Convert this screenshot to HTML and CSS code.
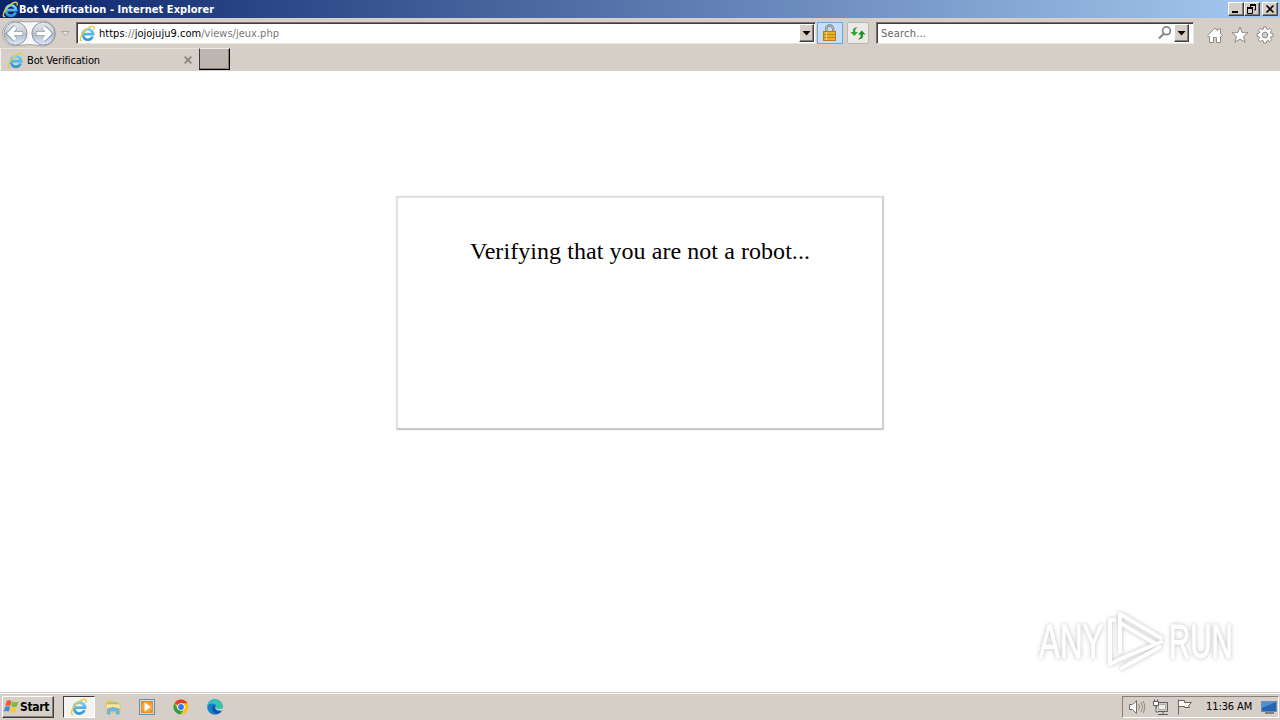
FILE: index.html
```html
<!DOCTYPE html>
<html lang="en">

<head>
    <meta charset="UTF-8">
    <title>Bot Verification</title>
    <link rel="stylesheet" href="styles.css">
</head>

<body>
    <!-- Shared Internet Explorer logo -->
    <svg class="defs" width="0" height="0">
        <defs>
            <linearGradient id="ie-blue" x1="0" y1="0" x2="0" y2="1">
                <stop offset="0" stop-color="#6fd0f7"/>
                <stop offset="1" stop-color="#2a98d8"/>
            </linearGradient>
            <linearGradient id="nav-fill" x1="0" y1="0" x2="0" y2="1">
                <stop offset="0" stop-color="#e6e9ee"/>
                <stop offset=".48" stop-color="#c6ccd4"/>
                <stop offset=".5" stop-color="#aebac8"/>
                <stop offset="1" stop-color="#dceafa"/>
            </linearGradient>
            <symbol id="ie" viewBox="0 0 16 16">
                <path d="M12.900 10.900A4.900 4.900 0 1 1 13.300 8.600H4.500" fill="none" stroke="url(#ie-blue)" stroke-width="2.500"/>
                <path d="M2.900 14.600C.6 15.300.9 12.300 2.500 9.500C5.500 4.300 11.300.2 13.800 1.400C14.700 1.900 14.500 3.200 14 4.200" fill="none" stroke="#f0c840" stroke-width="1.300"/>
            </symbol>
        </defs>
    </svg>

    <div class="titlebar">
        <svg class="ie-icon" width="17" height="17"><use href="#ie"/></svg>
        <span class="title">Bot Verification - Internet Explorer</span>
        <div class="window-buttons">
            <svg class="win-button" width="16" height="14"><path d="M3 9h6" stroke="#000" stroke-width="2"/></svg>
            <svg class="win-button" width="16" height="14"><path d="M5 1.500h6M5 2.500h6M5.500 1v3M10.500 1v6H9M2 4.500h6M2 5.500h6M2.500 4v6.500h5V4" fill="none" stroke="#000"/></svg>
            <svg class="win-button close" width="16" height="14"><path d="M3.500 2.500l7 7M10.500 2.500l-7 7" stroke="#000" stroke-width="1.700"/></svg>
        </div>
    </div>

    <div class="navbar">
        <svg class="nav-buttons" width="76" height="30">
            <path d="M15 3Q29 5 43 3A12 12 0 0 1 43 28Q29 25 15 28A12 12 0 0 1 15 3Z" fill="#f8f8f8" stroke="#aaa49f"/>
            <circle cx="15.500" cy="15.500" r="11.500" fill="url(#nav-fill)" stroke="#8d98a6"/>
            <circle cx="43.500" cy="15.500" r="11.500" fill="url(#nav-fill)" stroke="#8d98a6"/>
            <path d="M23 15.500H10M15.500 9l-6.500 6.500 6.500 6.500" fill="none" stroke="#8795a8" stroke-width="5"/>
            <path d="M22.500 15.500H10M15.500 9.300l-6.200 6.200 6.200 6.200" fill="none" stroke="#fff" stroke-width="3.600"/>
            <path d="M36 15.500H49M43.500 9l6.500 6.500-6.500 6.500" fill="none" stroke="#8795a8" stroke-width="5"/>
            <path d="M36.500 15.500H49M43.500 9.300l6.200 6.200-6.200 6.200" fill="none" stroke="#fff" stroke-width="3.600"/>
            <path d="M61.500 13.500h8l-4 4z" fill="#e5e1dc" stroke="#aaa6a1"/>
        </svg>
        <div class="address">
            <svg class="ie-icon" width="17" height="17"><use href="#ie"/></svg>
            <span class="url">https<i>://</i>jojojuju9.com<i>/views/jeux.php</i></span>
            <svg class="drop-button" width="15" height="18"><path d="M2.500 6h8l-4 4.500z"/></svg>
        </div>
        <div class="lock">
            <svg width="16" height="18">
                <path d="M4.200 9V5a3.500 3.500 0 0 1 7 0V9" fill="none" stroke="#777" stroke-width="2.400"/>
                <path d="M4.200 9V5a3.500 3.500 0 0 1 7 0V9" fill="none" stroke="#ddd" stroke-width=".8"/>
                <rect x="1.500" y="7.500" width="12" height="9" fill="#e8b12a" stroke="#b87e12"/>
                <path d="M2 10.500h11M2 13.500h11" stroke="#bd8515"/>
                <path d="M4.500 8v8" stroke="#f8d878"/>
            </svg>
        </div>
        <div class="refresh">
            <svg width="18" height="18">
                <path d="M8.500 3L6.300 5.500V8H9L5.300 12 1.500 8H4V5.500Q5 3.300 8.500 3Z" fill="#35a137"/>
                <path d="M9 15.500l2.500-2.500V10.500H9L12.800 6.500 16.500 10.500H14v2.500Q13 15.300 9 15.500Z" fill="#279029"/>
            </svg>
        </div>
        <div class="search">
            <span>Search...</span>
            <svg class="magnifier" width="16" height="16">
                <circle cx="9.500" cy="5.800" r="3.900" fill="none" stroke="#858585" stroke-width="1.700"/>
                <path d="M6.700 8.700L2 13.500" stroke="#858585" stroke-width="2.200"/>
            </svg>
            <svg class="drop-button" width="15" height="18"><path d="M2.500 6h8l-4 4.500z"/></svg>
        </div>
        <div class="tools">
            <svg width="18" height="18"><path d="M1.500 9.500L9 2l2.500 2.500V3h3v4.500L16.500 9.500l-1.500 1.500-.5-.5v6H10.500v-5h-3v5H3.500v-6l-.5.5z" fill="#fff" stroke="#8d8a87"/></svg>
            <svg width="18" height="18"><path d="M9 1l2.200 5.500 5.900.3-4.600 3.700 1.600 5.800L9 13l-5.100 3.300 1.600-5.800L.9 6.800l5.900-.3z" fill="#fff" stroke="#8d8a87"/></svg>
            <svg width="18" height="18">
                <path d="M7.700 1h2.600l.5 2.200 1 .4 1.900-1.200 1.900 1.900-1.200 1.900.4 1 2.200.5v2.600l-2.200.5-.4 1 1.200 1.900-1.900 1.900-1.900-1.200-1 .4-.5 2.200H7.700l-.5-2.200-1-.4-1.900 1.200-1.900-1.900 1.200-1.900-.4-1L1 10.300V7.700l2.200-.5.4-1-1.200-1.900 1.900-1.900 1.900 1.200 1-.4z" fill="#fff" stroke="#8d8a87"/>
                <circle cx="9" cy="9" r="2.800" fill="#d6d0ca" stroke="#8d8a87"/>
            </svg>
        </div>
    </div>

    <div class="tabbar">
        <div class="tab">
            <svg class="ie-icon" width="17" height="17"><use href="#ie"/></svg>
            <span class="tab-title">Bot Verification</span>
            <svg class="tab-close" width="8" height="8"><path d="M.7.7l6.600 6.600M7.300.7L.7 7.300" stroke="#8b8783" stroke-width="1.900"/></svg>
        </div>
        <div class="new-tab"></div>
    </div>

    <div class="page">
        <div class="box">Verifying that you are not a robot...</div>

        <div class="watermark">
            <span class="mark-any">ANY</span>
            <svg width="60" height="66" viewBox="0 0 60 66" fill="none" stroke="#fff" stroke-width="4" stroke-linejoin="round" stroke-linecap="round">
                <path d="M14 44V6l41 24M14 15l34 20"/>
                <path d="M8 12H4v44l10-5L55 34M54 39L16 60"/>
            </svg>
            <span class="mark-run">RUN</span>
        </div>
    </div>

    <div class="taskbar">
        <div class="start">
            <svg width="17" height="16">
                <path d="M3.800 2Q6 .5 8.500 2.200L7.300 7Q5 5.800 2.400 7z" fill="#ee5a2b"/>
                <path d="M9.400 2.500Q12.500 4 15.500 2.500L14 7.400Q11 8.600 8.200 7.300z" fill="#7cbd3c"/>
                <path d="M2.200 7.900Q5 6.600 7.100 7.900L5.800 12.600Q3.500 11.300.8 12.600z" fill="#3f8bd8"/>
                <path d="M8 8.200Q11 9.600 13.800 8.200L12.500 13Q9.500 14.500 6.600 13z" fill="#fac832"/>
            </svg>
            <span>Start</span>
        </div>
        <div class="task active"><svg width="18" height="18"><use href="#ie"/></svg></div>
        <div class="task">
            <svg width="18" height="18">
                <path d="M2 3.500l2-1.500h4l1 2h6v5H2z" fill="#e9c964"/>
                <path d="M3.500 4.500h10v3h-10z" fill="#7fc38d"/>
                <path d="M2 6h14v8H2z" fill="#f7e5a0" stroke="#dfbd5f" stroke-width=".7"/>
                <path d="M3.500 16v-5Q9 8 15 11v5h-2.500v-3H6v3z" fill="#75bddf" stroke="#4d9dc6" stroke-width=".7"/>
            </svg>
        </div>
        <div class="task">
            <svg width="18" height="18">
                <rect x="1.500" y="1.500" width="15" height="15" fill="#c3ddf1" stroke="#5b91bd"/>
                <rect x="3" y="3" width="12" height="12" fill="#f28b18"/>
                <circle cx="9" cy="9" r="5.500" fill="#f9a13b"/>
                <path d="M6.500 4.500l6.500 4.500-6.500 4.500z" fill="#fff"/>
            </svg>
        </div>
        <div class="task">
            <svg width="18" height="18">
                <circle cx="9" cy="9" r="7.500" fill="#fbc116"/>
                <path d="M9 9L2.500 5.200A7.500 7.500 0 0 1 15.500 5.200H9z" fill="#e33b2e"/>
                <path d="M2.500 5.200A7.500 7.500 0 0 0 8.500 16.500L12 11H5.800z" fill="#2c9f4b"/>
                <circle cx="9" cy="9" r="3.800" fill="#fff"/>
                <circle cx="9" cy="9" r="2.900" fill="#3978e4"/>
            </svg>
        </div>
        <div class="task">
            <svg width="18" height="18">
                <circle cx="9" cy="9" r="7.800" fill="#147fc9"/>
                <path d="M1.500 7A7.800 7.800 0 0 1 16.800 9Q16 12.500 11 11.500Q9.500 11 10.500 9Q10 5.500 6.500 5.500Q3 5.500 1.500 7z" fill="#38c6a2"/>
                <path d="M1.500 7A7.800 7.800 0 0 1 11 1.500Q5 3 1.500 7z" fill="#30aee5"/>
                <path d="M7 7.500Q4.500 13 9.500 15.500Q13.500 16 15.800 12.800Q10 14.500 9 10.500Q8.600 9 9.500 8z" fill="#13509b"/>
                <path d="M9.500 8.500Q8.500 12.800 15.800 12.500L17 10Q13.500 12 11 11Q10 10.500 10.500 9z" fill="#e2e7df"/>
            </svg>
        </div>
        <div class="tray">
            <svg width="18" height="18" fill="#fff" stroke="#716d69">
                <path d="M1.500 6.500h3l4-4v13l-4-4h-3z"/>
                <path d="M10.500 6q2 3 0 6M12.700 4q3.500 5 0 10M15 3q3.500 6 0 12" fill="none" stroke="#8f8b87"/>
            </svg>
            <svg class="network" width="18" height="18" fill="#d6cfc8" stroke="#5f5c59">
                <path d="M4.500 4.500h11v9h-11zM6 16.500h10M11 14v2"/>
                <path d="M6.500 6.500h7v5h-7z" fill="#eee" stroke="#aaa"/>
                <path d="M1.500 3.500h5v4h-5zM2.500 1.500v2M5.500 1.500v2M4 8v6h2" fill="#fff"/>
            </svg>
            <svg class="flag" width="18" height="18" fill="#fff" stroke="#6b6763">
                <path d="M2.500 1.500v15M2.500 2.500h6v2h7l-3 3 1 2H8.500v-1h-6z"/>
            </svg>
            <span class="clock">11:36 AM</span>
            <svg class="desktop" width="17" height="14">
                <rect x=".5" y="1.500" width="15" height="10" fill="#2465b6" stroke="#6790b9"/>
                <path d="M1 2h14L1 8z" fill="#4c90d8"/>
                <path d="M4 13h9" stroke="#333"/>
            </svg>
        </div>
    </div>
</body>

</html>
```
FILE: styles.css
```css
* {
    box-sizing: border-box;
}

body {
    margin: 0;
    width: 1280px;
    height: 720px;
    display: flex;
    flex-direction: column;
    overflow: hidden;
    background: #d6cfc8;
    color: #000;
    font-family: "DejaVu Sans Condensed", "DejaVu Sans", sans-serif;
    font-stretch: condensed;
    font-size: 11px;
    line-height: 14px;
    white-space: nowrap;
}

svg {
    display: block;
    flex: none;
}

.defs {
    position: absolute;
}

.titlebar {
    height: 18px;
    flex: none;
    display: flex;
    align-items: center;
    padding: 0 2px;
    background: linear-gradient(to right, #0a246a, #a6caf0);
    color: #fff;
}

.title {
    padding-top: 1px;
    font-weight: bold;
    letter-spacing: 0.04px;
}

.window-buttons {
    display: flex;
    margin-left: auto;
}

.win-button,
.drop-button {
    background: #d6cfc8;
    border: 1px solid;
    border-color: #fff #404040 #404040 #fff;
    box-shadow: inset -1px -1px #85807b;
}

.win-button.close {
    margin-left: 2px;
}

.navbar {
    height: 30px;
    flex: none;
    display: flex;
    align-items: flex-start;
}

.address,
.search {
    height: 22px;
    margin-top: 4px;
    display: flex;
    align-items: center;
    background: #fff;
    border: 1px solid;
    border-color: #77726e #e8e4df #e8e4df #77726e;
    box-shadow: inset 1px 1px #403d3b;
}

.address {
    width: 740px;
    padding: 0 1px 0 2px;
}

.url {
    margin-left: 3px;
    padding-top: 2px;
    letter-spacing: 0.02px;
}

.url i {
    font-style: normal;
    color: #777;
}

.address .drop-button {
    margin-left: auto;
}

.lock,
.refresh {
    height: 22px;
    margin-top: 4px;
    display: flex;
    align-items: center;
    justify-content: center;
}

.lock {
    width: 26px;
    margin-left: 1px;
    background: #c5defa;
    border: 1px solid #71a5df;
}

.refresh {
    width: 22px;
    margin-left: 4px;
    background: #ece9e6;
    border: 1px solid #b7b6b5;
    border-radius: 2px;
}

.search {
    width: 318px;
    margin-left: 7px;
    padding: 0 4px;
    color: #666;
}

.search span {
    padding-top: 2px;
    letter-spacing: 0.2px;
}

.magnifier {
    margin-left: auto;
    margin-right: 1px;
}

.tools {
    display: flex;
    gap: 7px;
    margin: 8px 0 0 12px;
}

.tabbar {
    height: 23px;
    flex: none;
    display: flex;
}

.tab {
    width: 199px;
    display: flex;
    align-items: center;
    padding-left: 6px;
    border-top: 1px solid #e7e2dc;
    border-left: 1px solid #f4f1ed;
}

.tab-title {
    margin-left: 3px;
    padding-top: 1px;
    letter-spacing: -0.15px;
}

.tab-close {
    margin-left: auto;
    margin-right: 7px;
}

.new-tab {
    width: 31px;
    height: 22px;
    background: #bdb5af;
    border: 1px solid #000;
    border-top-color: #eeeae6;
    border-left-color: #3d3936;
    box-shadow: inset -1px -1px #86807b;
}

.page {
    height: 621px;
    flex: none;
    position: relative;
    padding-top: 125px;
    background: #fff;
}

.box {
    width: 488px;
    height: 234px;
    margin: 0 auto;
    padding-top: 40px;
    border: 2px solid #e2e2e2;
    border-right-color: #d2d2d2;
    border-bottom-color: #c9c9c9;
    box-shadow: 0 0 1px #ccc;
    font-family: "Liberation Serif", serif;
    font-size: 24px;
    line-height: 27px;
    letter-spacing: 0.06px;
    text-align: center;
}

/* Logo floating over the page corner */
.watermark {
    position: absolute;
    left: 1039px;
    top: 537px;
    display: flex;
    align-items: center;
    color: #fff;
    font-family: "Liberation Sans", sans-serif;
    font-size: 49px;
    line-height: 66px;
    -webkit-text-stroke: 1px #fff;
    filter: drop-shadow(0 0 2px rgba(0, 0, 0, 0.26));
}

.mark-any,
.mark-run {
    width: 67px;
    transform: scaleX(0.64);
    transform-origin: left;
}

.mark-run {
    margin-left: 3px;
    transform: scaleX(0.6);
}

.taskbar {
    height: 28px;
    flex: none;
    display: flex;
    align-items: center;
    padding: 1px 1px 0 2px;
    border-top: 1px solid #d6cfc8;
    box-shadow: inset 0 1px #fff;
}

.start {
    width: 52px;
    height: 22px;
    display: flex;
    align-items: center;
    border: 1px solid;
    border-color: #fff #403d3b #403d3b #fff;
    box-shadow: inset -1px -1px #86807b;
    font-weight: bold;
    font-size: 12px;
    letter-spacing: -0.3px;
}

.task {
    width: 32px;
    height: 22px;
    margin-right: 2px;
    display: flex;
    align-items: center;
    justify-content: center;
}

.task.active {
    margin-left: 9px;
    background: #f5f3f0;
    border: 1px solid;
    border-color: #403d3b #fff #fff #403d3b;
}

.tray {
    width: 157px;
    height: 22px;
    margin-left: auto;
    display: flex;
    align-items: center;
    padding-left: 5px;
    border: 1px solid;
    border-color: #86807b #fff #fff #86807b;
}

.network,
.flag {
    margin-left: 6px;
}

.clock {
    margin-left: 12px;
    letter-spacing: -0.1px;
}

.desktop {
    margin-left: auto;
}
```
